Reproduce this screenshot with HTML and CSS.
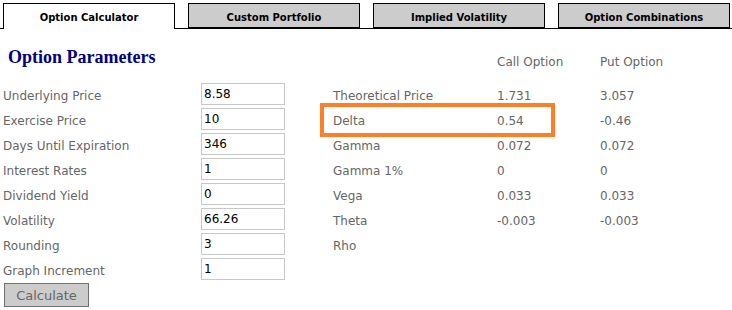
FILE: index.html
```html
<!DOCTYPE html>
<html lang="en">
<head>
<meta charset="utf-8">
<title>Option Calculator</title>
<link rel="stylesheet" href="styles.css">
</head>
<body>
<nav class="tabs">
  <div class="tab tab-active">Option Calculator</div>
  <div class="tab">Custom Portfolio</div>
  <div class="tab">Implied Volatility</div>
  <div class="tab">Option Combinations</div>
</nav>
<main class="content">
  <section class="params">
    <h2 class="title">Option Parameters</h2>
    <div class="form">
      <label class="field"><span class="field-label">Underlying Price</span><input class="field-input" type="text" value="8.58"></label>
      <label class="field"><span class="field-label">Exercise Price</span><input class="field-input" type="text" value="10"></label>
      <label class="field"><span class="field-label">Days Until Expiration</span><input class="field-input" type="text" value="346"></label>
      <label class="field"><span class="field-label">Interest Rates</span><input class="field-input" type="text" value="1"></label>
      <label class="field"><span class="field-label">Dividend Yield</span><input class="field-input" type="text" value="0"></label>
      <label class="field"><span class="field-label">Volatility</span><input class="field-input" type="text" value="66.26"></label>
      <label class="field"><span class="field-label">Rounding</span><input class="field-input" type="text" value="3"></label>
      <label class="field"><span class="field-label">Graph Increment</span><input class="field-input" type="text" value="1"></label>
    </div>
    <button class="calc" type="button">Calculate</button>
  </section>
  <section class="results">
    <div class="row row-head">
      <div class="cell c1"></div>
      <div class="cell c2">Call Option</div>
      <div class="cell c3">Put Option</div>
    </div>
    <div class="row">
      <div class="cell c1">Theoretical Price</div>
      <div class="cell c2">1.731</div>
      <div class="cell c3">3.057</div>
    </div>
    <div class="row">
      <div class="cell c1">Delta</div>
      <div class="cell c2">0.54</div>
      <div class="cell c3">-0.46</div>
      <div class="highlight"></div>
    </div>
    <div class="row">
      <div class="cell c1">Gamma</div>
      <div class="cell c2">0.072</div>
      <div class="cell c3">0.072</div>
    </div>
    <div class="row">
      <div class="cell c1">Gamma 1%</div>
      <div class="cell c2">0</div>
      <div class="cell c3">0</div>
    </div>
    <div class="row">
      <div class="cell c1">Vega</div>
      <div class="cell c2">0.033</div>
      <div class="cell c3">0.033</div>
    </div>
    <div class="row">
      <div class="cell c1">Theta</div>
      <div class="cell c2">-0.003</div>
      <div class="cell c3">-0.003</div>
    </div>
    <div class="row">
      <div class="cell c1">Rho</div>
      <div class="cell c2"></div>
      <div class="cell c3"></div>
    </div>
  </section>
</main>
</body>
</html>
```
FILE: styles.css
```css
* {
  box-sizing: border-box;
}

body {
  margin: 0;
  background: #fff;
  font-family: "DejaVu Sans", Verdana, sans-serif;
  font-size: 12px;
  color: #666;
}

.tabs {
  display: flex;
  align-items: flex-start;
  gap: 13px;
  height: 29px;
  padding: 3px 0 0 3px;
  border-bottom: 1px solid #000;
}

.tab {
  width: 172px;
  height: 25px;
  padding-top: 7px;
  border: 1px solid #000;
  border-bottom: none;
  background: #ccc;
  box-shadow: inset 0 -1px 0 #000;
  color: #000;
  font-family: "DejaVu Sans", Verdana, sans-serif;
  font-weight: bold;
  font-size: 10px;
  line-height: 13px;
  text-align: center;
}

.tab-active {
  height: 26px;
  background: #fff;
  box-shadow: none;
  position: relative;
  z-index: 1;
}

.content {
  display: flex;
  align-items: flex-start;
  padding-left: 3px;
}

.params {
  width: 300px;
}

.title {
  margin: 17px 0 14px 5px;
  font-family: "Liberation Serif", "Times New Roman", serif;
  font-weight: bold;
  font-size: 18px;
  line-height: 22px;
  color: #000080;
}

.form {
  display: grid;
  grid-template-columns: 198px 84px;
  grid-auto-rows: 25px;
}

.field {
  display: contents;
}

.field-label {
  padding-top: 3px;
  line-height: 22px;
  white-space: nowrap;
}

.field-input {
  width: 84px;
  height: 22px;
  margin: 1px 0 0 0;
  padding: 0 0 0 2px;
  border: 1px solid #c8c8c8;
  font-family: "DejaVu Sans", Verdana, sans-serif;
  font-size: 12px;
  color: #000;
  background: #fff;
  outline: none;
}

.calc {
  display: block;
  width: 85px;
  height: 24px;
  margin: 1px 0 0 1px;
  padding: 0;
  border: 1px solid #707070;
  background: #ccc;
  font-family: "DejaVu Sans", Verdana, sans-serif;
  font-size: 13px;
  color: #666;
}

.results {
  margin: 20px 0 0 30px;
}

.row {
  display: grid;
  grid-template-columns: 164px 103px 100px;
  height: 25px;
}

.row-head {
  height: 33px;
}

.cell {
  grid-row: 1;
  padding-top: 3px;
  line-height: 22px;
  white-space: nowrap;
}

.row-head .cell {
  padding-top: 2px;
}

.c1 { grid-column: 1; }
.c2 { grid-column: 2; }
.c3 { grid-column: 3; }

.highlight {
  grid-row: 1;
  grid-column: 1 / 3;
  align-self: start;
  width: 235px;
  height: 34px;
  margin: -4px 0 0 -13px;
  border: 4px solid #ff7f27;
}
```
